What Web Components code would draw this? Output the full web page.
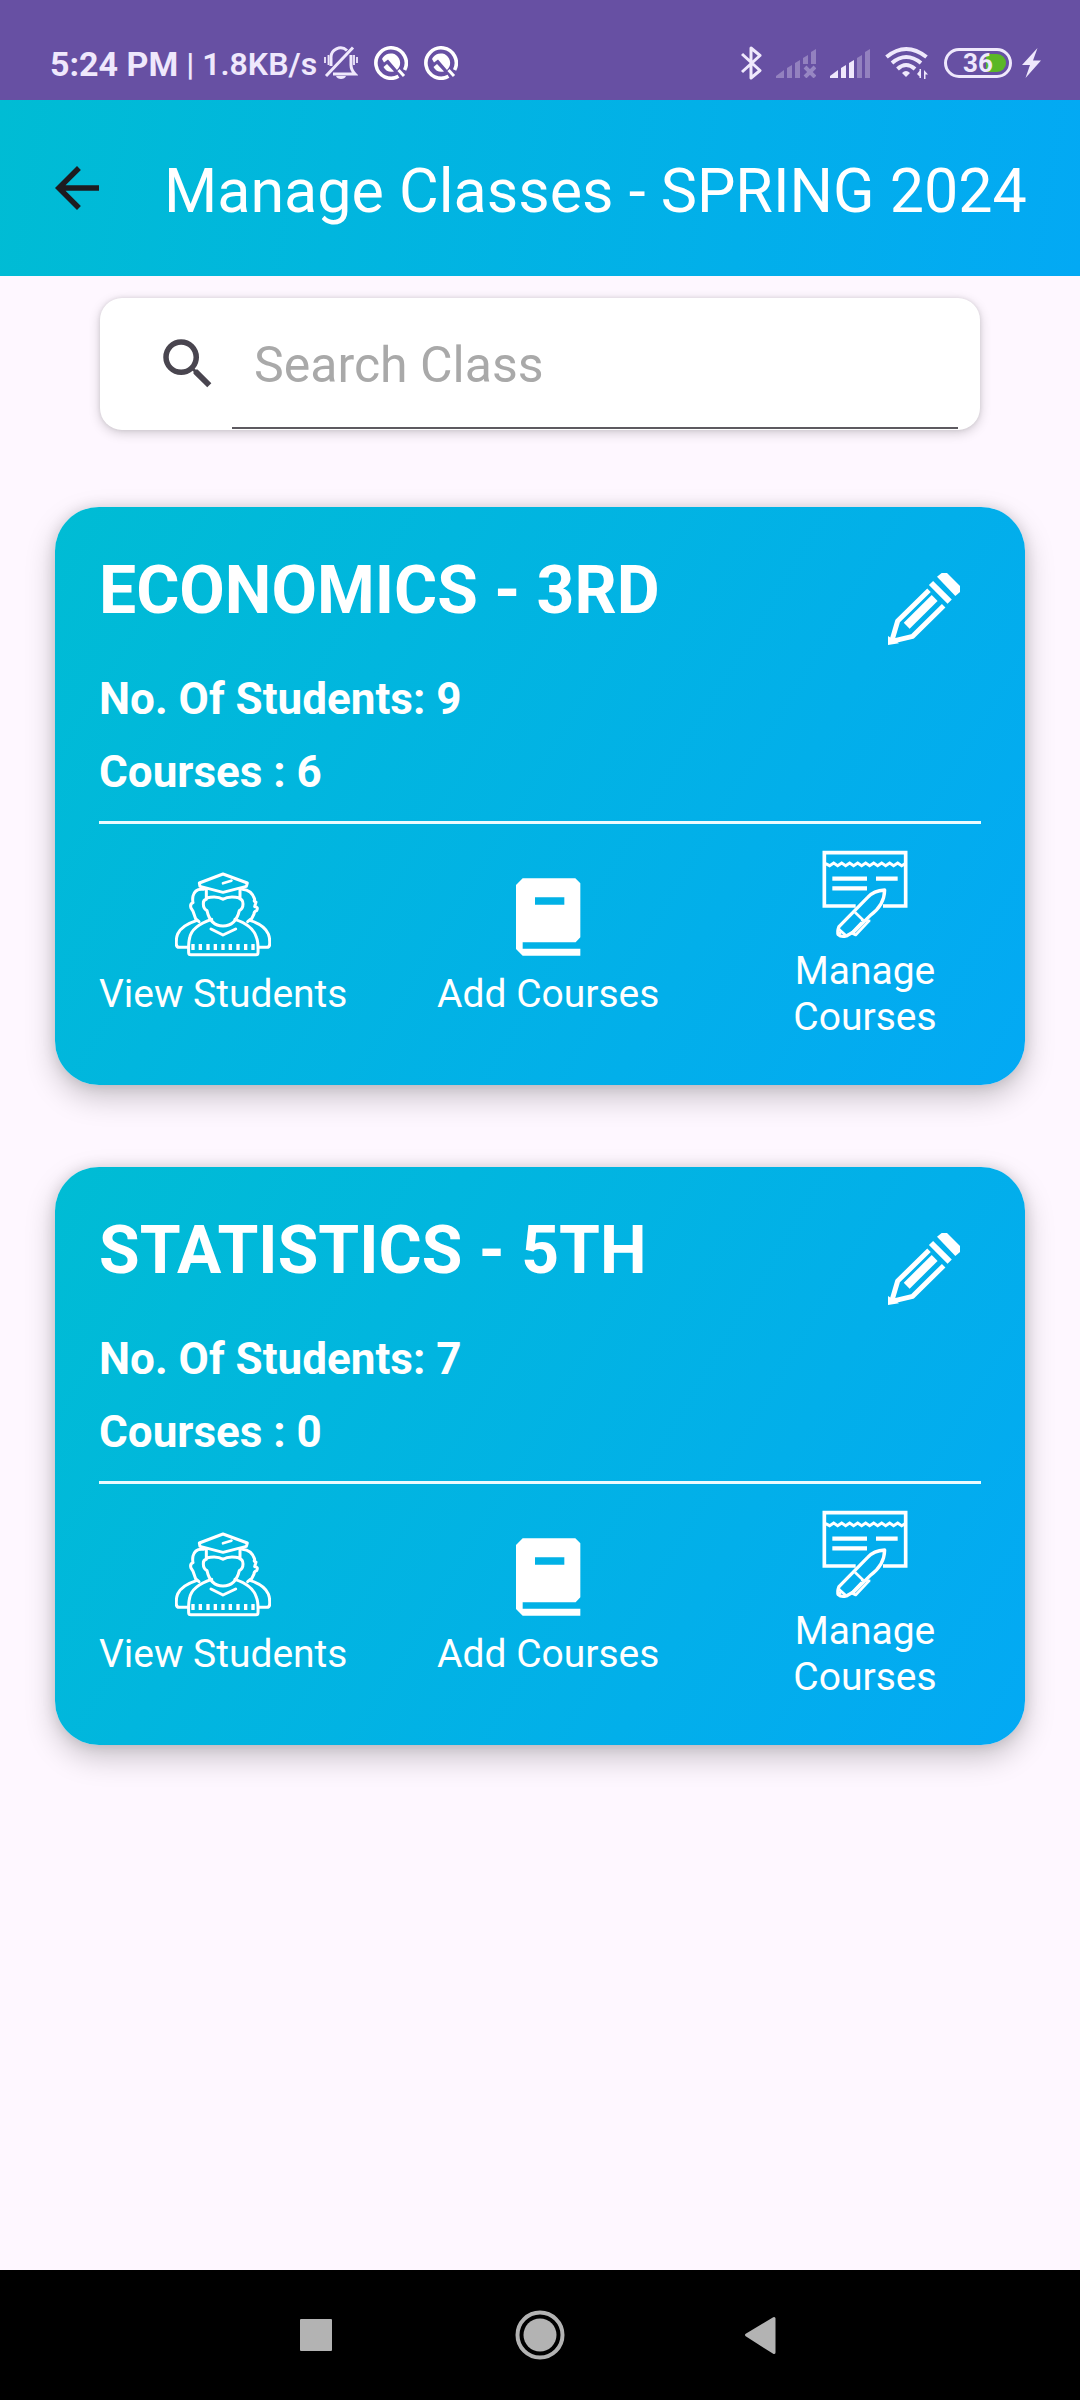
<!DOCTYPE html>
<html lang="en">
<head>
<meta charset="utf-8">
<meta name="viewport" content="width=device-width, initial-scale=1">
<title>Manage Classes</title>
<style>
  html, body { margin: 0; }
  body { font-family: Roboto, "Liberation Sans", sans-serif; background: #fef7ff; }
</style>
</head>
<body>
<classes-page>
  <status-bar slot="status"></status-bar>
  <app-header slot="header">Manage Classes - SPRING 2024</app-header>
  <search-box label="Search Class"></search-box>
  <class-card students="9" courses="6">ECONOMICS - 3RD</class-card>
  <class-card students="7" courses="0">STATISTICS - 5TH</class-card>
  <nav-bar slot="nav"></nav-bar>
</classes-page>

<script>
const RESET = `
  *, *::before { box-sizing: border-box; }
  svg { display: block; flex: none; }
  button { appearance: none; border: 0; margin: 0; padding: 0; background: none; color: inherit; font: inherit; cursor: pointer; }
`;

function define(name, html) {
  const template = document.createElement('template');
  customElements.define(name, class extends HTMLElement {
    connectedCallback() {
      if (this.shadowRoot) return;
      template.innerHTML = '<style>' + RESET + '</style>' + html(this);
      this.attachShadow({ mode: 'open' }).append(template.content.cloneNode(true));
    }
  });
}

define('classes-page', () => `
  <style>
    :host { display: flex; flex-direction: column; min-height: 100vh; }
    main { flex: 1; display: flex; flex-direction: column; gap: 82px; padding: 22px 55px 44px; }
    ::slotted(search-box) { margin: 0 45px -5px; }
  </style>
  <slot name="status"></slot>
  <slot name="header"></slot>
  <main><slot></slot></main>
  <slot name="nav"></slot>
`);

const bars = (levels, cross) => {
  const shapes = ['M0 29v-2l8-6v8z', 'M11 29V19l5-3v13z', 'M19 29V14l5-3v18z',
    cross ? 'M27 15V9l5-3v9z' : 'M27 29V9l5-3v23z',
    cross ? 'M35 15V3l5-3v15z' : 'M35 29V3l5-3v29z'];
  return shapes.map((d, i) => `<path d="${d}" opacity="${i < levels ? 1 : .32}"/>`).join('') +
    (cross ? '<path d="M29 18l10 10M39 18l-10 10" fill="none" stroke="currentColor" stroke-width="4" opacity=".36"/>' : '');
};

const appIcon = `
  <svg width="34" height="34" viewBox="0 0 34 34" aria-hidden="true">
    <path d="M24.500 30.300A15.200 15.200 0 1 1 30.600 24" fill="none" stroke="currentColor" stroke-width="3.600"/>
    <path d="M8 13a9.500 9.500 0 1 1 15 11L14 13.500l-4 3z"/>
    <path d="M9.500 21l3.500-3 7 7.500a9.500 9.500 0 0 1-10.500-4.500z"/>
    <path d="M24.500 24l5.500 6" fill="none" stroke="currentColor" stroke-width="3"/>
  </svg>`;

define('status-bar', () => `
  <style>
    :host { display: flex; align-items: center; justify-content: space-between; box-sizing: border-box;
      height: 100px; padding: 26px 39px 0 50px; background: #6750a3; color: #efe8fc; }
    svg { fill: currentColor; }
    .left, .right { display: flex; align-items: center; }
    .time { font-size: 34px; line-height: 40px; font-weight: 700; padding-top: 2px; }
    .speed { font-size: 32px; line-height: 40px; font-weight: 600; margin: 0 7px 0 8px; padding-top: 2px; }
    .apps { display: flex; gap: 16px; color: #fff; margin-left: 16px; }
    .right { gap: 14px; }
    .charge { display: flex; align-items: center; gap: 10px; }
    .battery { display: flex; align-items: center; justify-content: center; width: 68px; height: 30px;
      border: 3px solid; border-radius: 15px; font-size: 26px; line-height: 24px; font-weight: 700;
      padding: 3px; }
    .level { display: flex; align-items: center; justify-content: center; width: 100%; height: 18px; border-radius: 9px;
      background: linear-gradient(to right, transparent 64%, #5bb726 64%); }
  </style>
  <div class="left">
    <span class="time">5:24 PM</span>
    <span class="speed">| 1.8KB/s</span>
    <svg width="34" height="34" viewBox="0 0 34 34" role="img" aria-label="Silent">
      <g fill="none" stroke="currentColor" stroke-width="3">
        <path d="M2 30L29 1.500"/>
        <path d="M7 20V12a9.500 9.500 0 0 1 16-7.500" />
        <path d="M27 9v10c0 4 1 6 4 9H9"/>
        <path d="M1 11v6M4.500 9v10M30 9v10M33 11v6" stroke-width="1.800"/>
      </g>
      <path d="M12 30h10c-1 4-9 4-10 0z"/>
    </svg>
    <div class="apps">${appIcon}${appIcon}</div>
  </div>
  <div class="right">
    <svg width="21" height="34" viewBox="0 0 21 34" role="img" aria-label="Bluetooth">
      <path d="M1 8l18 16.500L10 32V2l9 7.500L1 26" fill="none" stroke="currentColor" stroke-width="3" stroke-linejoin="round"/>
    </svg>
    <svg width="40" height="29" viewBox="0 0 40 29" role="img" aria-label="No signal">${bars(0, true)}</svg>
    <svg width="40" height="29" viewBox="0 0 40 29" role="img" aria-label="Signal">${bars(3, false)}</svg>
    <svg width="46" height="34" viewBox="-1 0 46 34" role="img" aria-label="Wi-Fi">
      <g fill="none" stroke="currentColor" stroke-width="4">
        <path d="M1.500 11Q21 -5 41.500 11"/>
        <path d="M7 17Q21 5 36 17"/>
        <path d="M12.500 23Q21 15 30 23"/>
      </g>
      <path d="M17 27q4-4 8 0l-4 4z"/>
      <path d="M36 23v9l-4-4zM36 23v9h-1.500v-9zM39 24l4 4.500h-2.500V33H39z"/>
    </svg>
    <div class="charge">
      <div class="battery"><span class="level">36</span></div>
      <svg width="19" height="30" viewBox="0 0 19 30" role="img" aria-label="Charging"><path d="M15.500 0L0 17h8L3.500 30 19 12.500h-8z"/></svg>
    </div>
  </div>
`);

define('app-header', () => `
  <style>
    :host { display: flex; align-items: center; gap: 54px; box-sizing: border-box; min-height: 176px; padding: 6px 44px 0;
      background: linear-gradient(99deg, #00bcd4, #03a9f4); color: #fff; }
    button { color: #1d1b20; margin-bottom: 6px; }
    h1 { margin: 0; font-size: 61px; line-height: 72px; font-weight: 400; white-space: nowrap; }
  </style>
  <button type="button" aria-label="Back">
    <svg width="66" height="66" viewBox="0 0 24 24" fill="currentColor"><path d="M20 11H7.830l5.590-5.590L12 4l-8 8 8 8 1.410-1.410L7.830 13H20v-2z"/></svg>
  </button>
  <h1><slot></slot></h1>
`);

define('search-box', host => `
  <style>
    :host { display: flex; align-items: stretch; height: 132px; box-sizing: border-box; padding: 0 22px 1px 55px;
      background: #fff; border-radius: 22px; box-shadow: 0 3px 12px rgba(0,0,0,.18), 0 0 4px rgba(0,0,0,.1); }
    label { display: flex; align-items: center; width: 77px; color: #49454f; }
    input { flex: 1; min-width: 0; margin: 0; border: 0; border-bottom: 2px solid #5d5a60; border-radius: 0; outline: 0;
      background: none; padding: 4px 22px 0; font: 400 50px/60px Roboto, "Liberation Sans", sans-serif; color: #1d1b20; }
    input::placeholder { color: #a9a9a9; opacity: 1; }
  </style>
  <label for="query" aria-label="${host.getAttribute('label')}">
    <svg width="66" height="66" viewBox="0 0 24 24" fill="currentColor"><path d="M15.500 14h-.79l-.28-.27A6.471 6.471 0 0 0 16 9.500 6.500 6.500 0 1 0 9.500 16c1.610 0 3.090-.59 4.230-1.570l.27.28v.79l5 4.990L20.490 19l-4.990-5zm-6 0C7.010 14 5 11.990 5 9.500S7.010 5 9.500 5 14 7.010 14 9.500 11.990 14 9.500 14z"/></svg>
  </label>
  <input id="query" type="text" placeholder="${host.getAttribute('label')}">
`);

define('card-action', () => `
  <style>
    :host { display: flex; }
    button { display: flex; flex-direction: column; align-items: center; gap: 6px; width: 100%;
      font-size: 39px; line-height: 46px; text-align: center; }
  </style>
  <button type="button"><slot name="icon"></slot><span><slot></slot></span></button>
`);

const studentsIcon = `
  <svg slot="icon" width="96" height="96" viewBox="288 87 288 288" fill="none" stroke="#fff" stroke-width="9" stroke-linejoin="round" stroke-linecap="round" aria-hidden="true">
    <path d="M361 129L432 102l73 27-3 10-70 18-69-18z"/>
    <path d="M432 130l25-8" stroke-width="8"/>
    <path d="M382 146v28q32-8 50 4 18-12 51-4v-28"/>
    <path d="M382 178q-10 2-9 14 0 14 11 20 10 46 48 46t49-46q11-6 11-20 0-14-10-16"/>
    <path d="M374 148q-26-4-32 20-2 12 0 20-10 4-6 16l6 10 10 28q-44 14-56 40-5 12-4 30 0 10 8 10h27"/>
    <path d="M490 148q28 2 37 30-4 8 4 8l-4 14q12 0 6 12-8 2-8 10l-10 20q42 14 53 40 5 12 4 30 0 10-8 10h-25"/>
    <path d="M352 238l8 7M514 238l-8 7"/>
    <path d="M398 238q-60 20-66 56-4 14-3 44 0 6 7 6h195q6 0 6-6 1-30-4-44-10-38-65-56"/>
    <path d="M396 267l36 18 38-18"/>
    <path d="M342 312v18M364 312v18M387 312v18M409 312v18M432 312v18M454 312v18M477 312v18M500 312v18M522 312v18" stroke-width="10" stroke-linecap="butt"/>
  </svg>`;

const bookIcon = `
  <svg slot="icon" width="96" height="96" viewBox="240 87 288 288" fill="#fff" aria-hidden="true">
    <path fill-rule="evenodd" d="M308 115H466L481 130V292L467 307H308V326H481V347H308L288 327V135ZM345 172V194H433V172Z"/>
  </svg>`;

const manageIcon = `
  <svg slot="icon" width="96" height="96" viewBox="168 78 288 288" fill="none" stroke="#fff" stroke-width="10" aria-hidden="true">
    <path d="M284 258H190V98H434V258H366" stroke-width="11"/>
    <path d="M194 131l12 6 12-8 12 8 12-8 12 8 12-8 12 8 12-8 12 8 12-8 12 8 12-8 12 8 12-8 12 8 12-8 12 8 12-8 12 8 10-6" stroke-width="9"/>
    <path d="M214 176H318M345 176H410M214 205H318" stroke-width="13"/>
    <path d="M371 210Q338 212 320 232L234 320Q228 336 232 344 240 352 256 348L280 334 328 286Q370 256 371 210Z" stroke-linejoin="round"/>
    <path d="M282 277l24 23M300 300l28 3M322 305l-38 40-12-6 30-32M232 326l22 20M230 346l12-12" stroke-width="8" stroke-linejoin="round"/>
  </svg>`;

define('class-card', host => `
  <style>
    :host { display: flex; flex-direction: column; padding: 45px 44px; border-radius: 44px; color: #fff;
      background: linear-gradient(121deg, #00bcd4, #03a9f4);
      box-shadow: 0 12px 30px rgba(0,0,0,.22), 0 0 14px rgba(0,0,0,.12); }
    .head { display: flex; align-items: flex-start; justify-content: space-between; }
    h2 { margin: 0 0 43px; font-size: 66px; line-height: 78px; font-weight: 700; }
    .facts { display: flex; flex-direction: column; gap: 21px; font-size: 44px; line-height: 52px; font-weight: 700; }
    p { margin: 0; }
    .edit { padding: 21px; }
    hr { width: 100%; height: 3px; margin: 23px 0 22px; border: 0; background: #ecfbff; }
    .actions { display: flex; align-items: center; justify-content: space-between; }
    .wrap { width: 232px; }
  </style>
  <div class="head">
    <div>
      <h2><slot></slot></h2>
      <div class="facts">
        <p>No. Of Students: ${host.getAttribute('students')}</p>
        <p>Courses : ${host.getAttribute('courses')}</p>
      </div>
    </div>
    <button class="edit" type="button" aria-label="Edit class">
      <svg width="72" height="72" viewBox="141 99 216 216" fill="none" stroke="#fff" stroke-width="15">
        <path d="M264 151L170 243 152 304 215 289 308 197" stroke-linejoin="round"/>
        <path d="M141 315V288L174 310Z" fill="#fff" stroke="none"/>
        <path d="M281 174L197 257" stroke-width="25"/>
        <path d="M270 129L326 185" stroke-width="18"/>
        <path d="M288 110L302 99H318L357 138V156L343 168Z" fill="#fff" stroke="none"/>
      </svg>
    </button>
  </div>
  <hr>
  <div class="actions">
    <card-action>${studentsIcon}View Students</card-action>
    <card-action>${bookIcon}Add Courses</card-action>
    <card-action class="wrap">${manageIcon}Manage Courses</card-action>
  </div>
`);

define('nav-bar', () => `
  <style>
    :host { display: block; background: #000; }
    nav { display: flex; align-items: center; justify-content: center; gap: 122px; height: 130px; color: #b3b3b3; }
    button { display: flex; align-items: center; justify-content: center; width: 100px; height: 100px; }
    svg { fill: currentColor; }
  </style>
  <nav aria-label="System">
    <button type="button" aria-label="Recent apps"><svg width="50" height="50" viewBox="0 0 50 50"><rect x="7" y="9" width="32" height="32" rx="1"/></svg></button>
    <button type="button" aria-label="Home"><svg width="50" height="50" viewBox="0 0 50 50"><circle cx="25" cy="25" r="16.500"/><circle cx="25" cy="25" r="22.500" fill="none" stroke="currentColor" stroke-width="4"/></svg></button>
    <button type="button" aria-label="Back"><svg width="50" height="50" viewBox="0 0 50 50"><path d="M9.500 25L37 8.500V42.500Z" stroke="currentColor" stroke-width="3" stroke-linejoin="round"/></svg></button>
  </nav>
`);
</script>
</body>
</html>
